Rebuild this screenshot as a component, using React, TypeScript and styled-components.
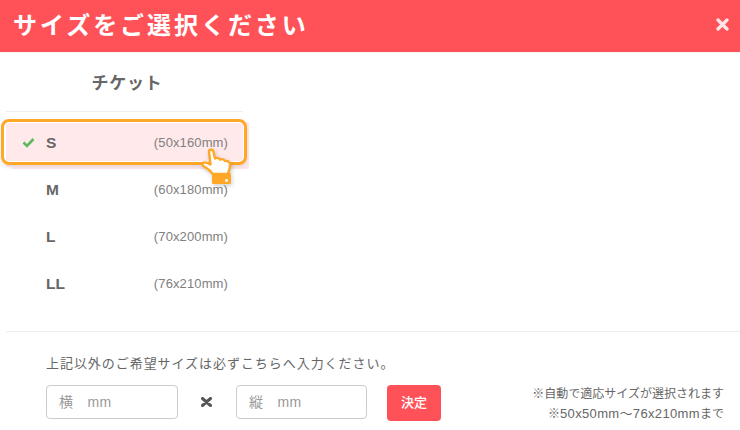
import React from "react";
import styled, { createGlobalStyle } from "styled-components";

const Global = createGlobalStyle`
  html, body { margin: 0; padding: 0; background: #fff; }
  body { font-family: "Liberation Sans", "Noto Sans CJK JP", sans-serif; color: #666; }
`;

const Modal = styled.div`
  width: 740px;
  height: 430px;
  overflow: hidden;
  display: flex;
  flex-direction: column;
  background: #fff;
`;

const Header = styled.header`
  height: 53px;
  flex: none;
  background: #ff5258;
  display: flex;
  align-items: center;
  justify-content: space-between;
  padding: 0 11px 2px 13px;
  box-sizing: border-box;
  border-bottom: 1px solid #f3f3f3;
`;

const Title = styled.h1`
  margin: 0 0 3px;
  font: 700 24px/30px "Noto Sans CJK JP", sans-serif;
  letter-spacing: 2.95px;
  color: #fff;
`;

const CloseIcon = styled.svg`
  width: 13px;
  height: 13px;
  display: block;
  opacity: 0.85;
  margin-top: -2px;
`;

const Body = styled.main`
  height: 278px;
  flex: none;
  padding: 0 0 0 6px;
  box-sizing: border-box;
`;

const SizeColumn = styled.section`
  width: 237px;
`;

const ColumnTitle = styled.h2`
  margin: 0;
  height: 59px;
  box-sizing: border-box;
  padding: 17px 0 0 5px;
  font: 700 17px/24px "Noto Sans CJK JP", sans-serif;
  letter-spacing: 0.8px;
  text-align: center;
  color: #666;
  border-bottom: 1px solid #eee;
`;

const SizeList = styled.ul`
  list-style: none;
  margin: 0;
  padding: 8px 0 0;
`;

const SizeRow = styled.li<{ $selected?: boolean }>`
  position: relative;
  height: 47px;
  box-sizing: border-box;
  padding-bottom: 2px;
  display: flex;
  align-items: center;
  background: ${(p) => (p.$selected ? "#ffe9eb" : "transparent")};
  box-shadow: ${(p) => (p.$selected ? "6px 2px 0 #ffe9eb" : "none")};
`;

const CheckCell = styled.span`
  width: 40px;
  flex: none;
  display: flex;
  justify-content: flex-end;
  padding-right: 11px;
  box-sizing: border-box;
`;

const CheckIcon = styled.svg`
  width: 13px;
  height: 11px;
  display: block;
`;

const SizeName = styled.span`
  flex: 1;
  font: 700 15.5px/20px "Liberation Sans", sans-serif;
  color: #666;
`;

const SizeDim = styled.span`
  font: 400 13px/20px "Liberation Sans", sans-serif;
  letter-spacing: 0.12px;
  color: #808080;
  margin-right: 15px;
`;

const Highlight = styled.span`
  position: absolute;
  left: -5px;
  top: -1px;
  width: 246px;
  height: 46px;
  box-sizing: border-box;
  border: 3.5px solid #ffa726;
  border-radius: 8px;
  box-shadow: inset 0 0 0 1px #fff, 0 2px 4px rgba(0, 0, 0, 0.1);
  pointer-events: none;
`;

const Pointer = styled.svg`
  position: absolute;
  left: 195px;
  top: 28px;
  width: 33px;
  height: 38px;
  filter: drop-shadow(1px 2px 2px rgba(0, 0, 0, 0.18));
`;

const Footer = styled.footer`
  margin-left: 6px;
  border-top: 1px solid #eee;
  flex: 1;
  padding: 21px 16px 0 40px;
`;

const Prompt = styled.p`
  margin: 0 0 12px;
  font: 400 13px/20px "Noto Sans CJK JP", sans-serif;
  letter-spacing: 0.95px;
  color: #666;
`;

const FormRow = styled.div`
  display: flex;
  align-items: flex-start;
`;

const SizeInput = styled.input<{ $width: number }>`
  width: ${(p) => p.$width}px;
  height: 34px;
  box-sizing: border-box;
  border: 1px solid #ccc;
  border-radius: 4px;
  padding: 0 12px;
  background: #fff;
  font: 400 14px/20px "Liberation Sans", "Noto Sans CJK JP", sans-serif;
  letter-spacing: 0.3px;
  &::placeholder { color: #999; opacity: 1; }
`;

const Times = styled.svg`
  width: 11px;
  height: 10px;
  margin: 12px 24px 0 23px;
  flex: none;
`;

const Submit = styled.button`
  width: 54px;
  height: 36px;
  margin-left: 20px;
  border: 0;
  border-radius: 4px;
  background: #ff5258;
  color: #fff;
  font: 500 13px/20px "Noto Sans CJK JP", sans-serif;
  padding: 0 0 2px;
`;

const Note = styled.p`
  margin: 0 0 0 auto;
  text-align: right;
  font: 400 12px/19px "Liberation Sans", "Noto Sans CJK JP", sans-serif;
  color: #666;
`;

const NoteLatin = styled.span`
  font-size: 13px;
  letter-spacing: 0.35px;
`;

const sizes = [
  { name: "S", dim: "(50x160mm)", selected: true },
  { name: "M", dim: "(60x180mm)" },
  { name: "L", dim: "(70x200mm)" },
  { name: "LL", dim: "(76x210mm)" },
];

const Hand = () => (
  <Pointer viewBox="0 0 33 38" aria-hidden="true">
    <rect x="11" y="25" width="19" height="11" rx="1.5" fill="#ffa726" />
    <path
      d="M8 3.5 C8 1.5 11.5 1 12.3 3 L14 10.5 C16 9.5 18 10 19 11.5 C21 10.8 23 11.3 24 13 C26 12.5 28.5 13.5 29 16 C29.5 20 28 23 26.8 26 L12 26 C9.5 23 6 20 2.5 18 C1 17 1 15 2.8 14.5 C5 14 7.5 15.5 9.5 16.5 Z"
      fill="#fff"
      stroke="#ffa726"
      strokeWidth="2.4"
      strokeLinejoin="round"
    />
    <circle cx="25.5" cy="32.5" r="1.4" fill="#fff" />
  </Pointer>
);

export default function App() {
  return (
    <>
      <Global />
      <Modal>
        <Header>
          <Title>サイズをご選択ください</Title>
          <CloseIcon viewBox="0 0 13 13" aria-hidden="true">
            <path d="M2 2 L11 11 M11 2 L2 11" stroke="#fff" strokeWidth="3.2" strokeLinecap="round" />
          </CloseIcon>
        </Header>
        <Body>
          <SizeColumn>
            <ColumnTitle>チケット</ColumnTitle>
            <SizeList>
              {sizes.map((s) => (
                <SizeRow key={s.name} $selected={s.selected}>
                  <CheckCell>
                    {s.selected && (
                      <CheckIcon viewBox="0 0 13 11" aria-hidden="true">
                        <path d="M1.5 5.5 L5 9 L11.5 2" fill="none" stroke="#5cb85c" strokeWidth="2.6" />
                      </CheckIcon>
                    )}
                  </CheckCell>
                  <SizeName>{s.name}</SizeName>
                  <SizeDim>{s.dim}</SizeDim>
                  {s.selected && (
                    <>
                      <Highlight />
                      <Hand />
                    </>
                  )}
                </SizeRow>
              ))}
            </SizeList>
          </SizeColumn>
        </Body>
        <Footer>
          <Prompt>上記以外のご希望サイズは必ずこちらへ入力ください。</Prompt>
          <FormRow>
            <SizeInput $width={132} placeholder="横　mm" />
            <Times viewBox="0 0 11 10" aria-hidden="true">
              <path d="M1.5 1.5 L9.5 8.5 M9.5 1.5 L1.5 8.5" stroke="#555" strokeWidth="3" strokeLinecap="round" />
            </Times>
            <SizeInput $width={131} placeholder="縦　mm" />
            <Submit>決定</Submit>
            <Note>
              ※自動で適応サイズが選択されます
              <br />
              ※<NoteLatin>50x50mm〜76x210mm</NoteLatin>まで
            </Note>
          </FormRow>
        </Footer>
      </Modal>
    </>
  );
}
